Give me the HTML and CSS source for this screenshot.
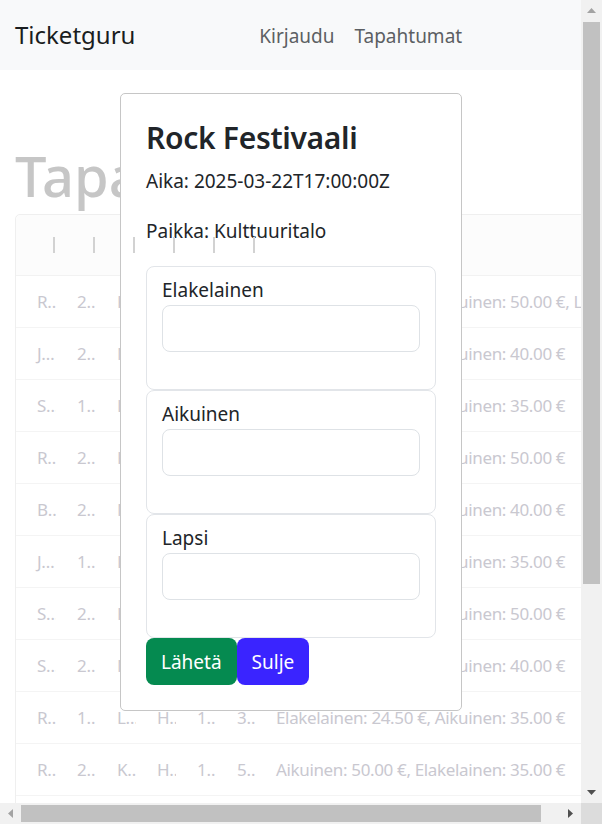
FILE: index.html
```html
<!DOCTYPE html>
<html lang="fi">
<head>
    <meta charset="UTF-8">
    <meta name="viewport" content="width=device-width, initial-scale=1.0">
    <title>Ticketguru</title>
    <link rel="stylesheet" href="styles.css">
</head>
<body>
<div class="screen">
    <div class="viewport">
        <nav class="navbar">
            <a class="brand" href="#">Ticketguru</a>
            <ul class="nav-links">
                <li><a href="#">Kirjaudu</a></li>
                <li><a href="#">Tapahtumat</a></li>
            </ul>
        </nav>

        <main class="page">
            <h1 class="page-title">Tapahtumat</h1>
            <div class="grid">
                <div class="grid-head">
                    <div class="col"><span class="sep"></span></div>
                    <div class="col"><span class="sep"></span></div>
                    <div class="col"><span class="sep"></span></div>
                    <div class="col"><span class="sep"></span></div>
                    <div class="col"><span class="sep"></span></div>
                    <div class="col"><span class="sep"></span></div>
                    <div class="col col-price"></div>
                </div>
                <div class="grid-row">
                    <div class="cell">Rock Festivaali</div><div class="cell">2025-03-22</div><div class="cell">Kulttuuritalo</div><div class="cell">Helsinki</div><div class="cell">1000</div><div class="cell">500</div>
                    <div class="cell cell-price">Elakelainen: 35.00 €, Aikuinen: 50.00 €, Lapsi: 25.00 €</div>
                </div>
                <div class="grid-row">
                    <div class="cell">Jazz-ilta</div><div class="cell">2025-04-10</div><div class="cell">Musiikkitalo</div><div class="cell">Helsinki</div><div class="cell">800</div><div class="cell">300</div>
                    <div class="cell cell-price">Elakelainen: 28.00 €, Aikuinen: 40.00 €</div>
                </div>
                <div class="grid-row">
                    <div class="cell">Sinfoniakonsertti</div><div class="cell">1.5.2025</div><div class="cell">Lahden Sibeliustalo</div><div class="cell">Lahti</div><div class="cell">1200</div><div class="cell">400</div>
                    <div class="cell cell-price">Elakelainen: 24.50 €, Aikuinen: 35.00 €</div>
                </div>
                <div class="grid-row">
                    <div class="cell">Rock Festivaali</div><div class="cell">2025-06-14</div><div class="cell">Kulttuuritalo</div><div class="cell">Helsinki</div><div class="cell">1000</div><div class="cell">500</div>
                    <div class="cell cell-price">Elakelainen: 35.00 €, Aikuinen: 50.00 €</div>
                </div>
                <div class="grid-row">
                    <div class="cell">Blues-ilta</div><div class="cell">2025-07-02</div><div class="cell">Musiikkitalo</div><div class="cell">Helsinki</div><div class="cell">800</div><div class="cell">300</div>
                    <div class="cell cell-price">Elakelainen: 28.00 €, Aikuinen: 40.00 €</div>
                </div>
                <div class="grid-row">
                    <div class="cell">Jazz-ilta</div><div class="cell">1.8.2025</div><div class="cell">Lahden Sibeliustalo</div><div class="cell">Lahti</div><div class="cell">1200</div><div class="cell">400</div>
                    <div class="cell cell-price">Elakelainen: 24.50 €, Aikuinen: 35.00 €</div>
                </div>
                <div class="grid-row">
                    <div class="cell">Sinfoniakonsertti</div><div class="cell">2025-09-12</div><div class="cell">Kulttuuritalo</div><div class="cell">Helsinki</div><div class="cell">1000</div><div class="cell">500</div>
                    <div class="cell cell-price">Elakelainen: 35.00 €, Aikuinen: 50.00 €</div>
                </div>
                <div class="grid-row">
                    <div class="cell">Syystanssit</div><div class="cell">2025-10-04</div><div class="cell">Musiikkitalo</div><div class="cell">Helsinki</div><div class="cell">800</div><div class="cell">300</div>
                    <div class="cell cell-price">Elakelainen: 28.00 €, Aikuinen: 40.00 €</div>
                </div>
                <div class="grid-row">
                    <div class="cell">Rock-ilta</div><div class="cell">1.11.2025</div><div class="cell">Lahden Sibeliustalo</div><div class="cell">Helsinki</div><div class="cell">1200</div><div class="cell">300</div>
                    <div class="cell cell-price">Elakelainen: 24.50 €, Aikuinen: 35.00 €</div>
                </div>
                <div class="grid-row">
                    <div class="cell">Rock Festivaali</div><div class="cell">2025-12-06</div><div class="cell">Kulttuuritalo</div><div class="cell">Helsinki</div><div class="cell">1000</div><div class="cell">500</div>
                    <div class="cell cell-price">Aikuinen: 50.00 €, Elakelainen: 35.00 €</div>
                </div>
                <div class="grid-row">
                    <div class="cell">Jazz-ilta</div><div class="cell">2026-01-17</div><div class="cell">Musiikkitalo</div><div class="cell">Helsinki</div><div class="cell">800</div><div class="cell">300</div>
                    <div class="cell cell-price">Aikuinen: 40.00 €, Elakelainen: 28.00 €</div>
                </div>
                <div class="grid-row">
                    <div class="cell">Sinfoniakonsertti</div><div class="cell">2026-02-07</div><div class="cell">Lahden Sibeliustalo</div><div class="cell">Lahti</div><div class="cell">1200</div><div class="cell">400</div>
                    <div class="cell cell-price">Aikuinen: 35.00 €, Elakelainen: 24.50 €</div>
                </div>
            </div>
        </main>

        <div class="modal">
            <h2 class="modal-title">Rock Festivaali</h2>
            <p>Aika: 2025-03-22T17:00:00Z</p>
            <p>Paikka: Kulttuuritalo</p>
            <form class="ticket-form">
                <div class="field">
                    <label for="elakelainen">Elakelainen</label>
                    <input type="number" id="elakelainen" name="elakelainen">
                </div>
                <div class="field">
                    <label for="aikuinen">Aikuinen</label>
                    <input type="number" id="aikuinen" name="aikuinen">
                </div>
                <div class="field">
                    <label for="lapsi">Lapsi</label>
                    <input type="number" id="lapsi" name="lapsi">
                </div>
                <div class="actions">
                    <button type="button" class="btn btn-send">Lähetä</button>
                    <button type="button" class="btn btn-close">Sulje</button>
                </div>
            </form>
        </div>
    </div>

    <!-- window scrollbars -->
    <div class="scrollbar scrollbar-v">
        <span class="sb-btn"><svg width="9" height="5" viewBox="0 0 9 5"><polygon points="0,5 4.5,0 9,5" fill="#a3a3a3"/></svg></span>
        <span class="sb-track"><span class="sb-thumb"></span></span>
        <span class="sb-btn"><svg width="9" height="5" viewBox="0 0 9 5"><polygon points="0,0 9,0 4.5,5" fill="#505050"/></svg></span>
    </div>
    <div class="scrollbar scrollbar-h">
        <span class="sb-btn"><svg width="5" height="9" viewBox="0 0 5 9"><polygon points="5,0 5,9 0,4.5" fill="#a3a3a3"/></svg></span>
        <span class="sb-track"><span class="sb-thumb"></span></span>
        <span class="sb-btn"><svg width="5" height="9" viewBox="0 0 5 9"><polygon points="0,0 5,4.5 0,9" fill="#505050"/></svg></span>
    </div>
    <div class="scrollbar-corner"></div>
</div>
</body>
</html>
```

FILE: styles.css
```css
body {
    margin: 0;
    font-family: "Noto Sans", sans-serif;
    font-size: 19px;
    line-height: 30px;
    color: #212529;
}
.screen {
    display: grid;
    grid-template-columns: 581px 21px;
    grid-template-rows: 803px 21px;
    width: 602px;
    height: 824px;
}
.viewport {
    position: relative;
    overflow: hidden;
}
.navbar {
    display: flex;
    align-items: center;
    height: 70px;
    padding: 0 15px;
    background: #f8f9fa;
}
.brand {
    font-size: 24px;
    line-height: 36px;
    color: #1a1d20;
    text-decoration: none;
    margin-right: 20px;
}
.nav-links {
    flex: 1;
    display: flex;
    justify-content: center;
    list-style: none;
    margin: 0;
    padding: 0;
}
.nav-links a {
    display: block;
    padding: 2px 10px 0;
    color: #5c5f63;
    text-decoration: none;
}

/* page behind the dialog, drawn faded */
.page {
    width: 598px;
    padding: 0 15px;
}
.page-title {
    margin: 72px 0 5px;
    font-size: 56px;
    font-weight: 500;
    line-height: 1.2;
    color: #c6c6c6;
}
.grid {
    border: 1px solid #efefef;
    border-radius: 5px;
    font-size: 17px;
    letter-spacing: -0.35px;
}
.grid-head {
    display: flex;
    height: 60px;
    background: #fcfcfc;
    border-bottom: 1px solid #f2f2f2;
    border-radius: 5px 5px 0 0;
}
.col {
    width: 40px;
    display: flex;
    align-items: center;
    justify-content: flex-end;
}
.col-price {
    flex: 1;
}
.sep {
    position: relative;
    z-index: 2; /* separators sit over the dialog */
    width: 2px;
    height: 16px;
    margin-right: 1px;
    background: #d2d2d2;
}
.grid-row {
    display: flex;
    align-items: center;
    height: 51px;
    border-bottom: 1px solid #f4f4f4;
}
.cell {
    width: 40px;
    flex-shrink: 0;
    box-sizing: border-box;
    padding-left: 21px;
    white-space: nowrap;
    overflow: hidden;
    text-overflow: ellipsis;
    color: #c9c8d0;
}
.cell-price {
    flex: 1;
    padding-left: 20px;
}

/* dialog */
.modal {
    position: absolute;
    top: 93px;
    left: 120px;
    z-index: 1;
    width: 290px;
    padding: 25px;
    background: #fff;
    border: 1px solid #c6c6c6;
    border-radius: 5px;
}
.modal-title {
    margin: 0 0 9px;
    font-size: 30px;
    font-weight: 600;
    line-height: 38px;
    letter-spacing: -0.3px;
}
.modal p {
    margin: 0 0 20px;
}
.field {
    border: 1px solid #e2e5e9;
    border-radius: 8px;
    padding: 8px 15px 17px;
}
.field label {
    display: block;
}
.field input {
    display: block;
    width: 100%;
    height: 47px;
    box-sizing: border-box;
    margin-bottom: 20px;
    padding: 7px 15px;
    font: inherit;
    border: 1px solid #dee2e6;
    border-radius: 8px;
}
.actions {
    display: flex;
}
.btn {
    height: 47px;
    padding: 0 14px;
    font: inherit;
    color: #fff;
    border: 1px solid transparent;
    border-radius: 8px;
}
.btn-send {
    background: #058a50;
}
.btn-close {
    background: #3a24ff;
}

/* scrollbars */
.scrollbar {
    display: flex;
    background: #f1f1f1;
}
.scrollbar-v {
    flex-direction: column;
}
.sb-btn {
    flex: 0 0 21px;
    display: flex;
    align-items: center;
    justify-content: center;
}
.sb-track {
    flex: 1;
    display: flex;
}
.scrollbar-v .sb-track {
    flex-direction: column;
    padding: 1px 2px 0;
}
.scrollbar-h .sb-track {
    padding: 2px 0;
}
.sb-thumb {
    background: #c1c1c1;
}
.scrollbar-v .sb-thumb {
    height: 562px;
}
.scrollbar-h .sb-thumb {
    width: 520px;
}
.scrollbar-corner {
    background: #dcdcdc;
}
```
